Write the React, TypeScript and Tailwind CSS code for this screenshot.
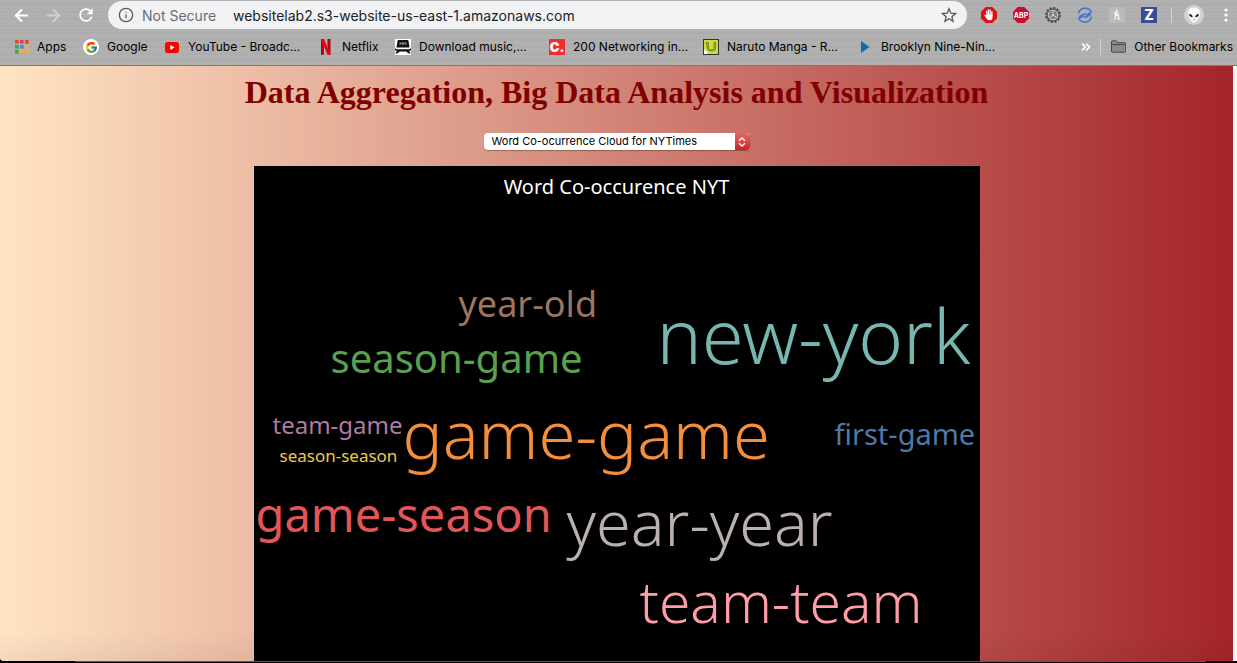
import type { ReactNode } from "react";
import { ArrowLeft, ArrowRight, Info, ChevronsRight } from "lucide-react";
import { MdRefresh } from "react-icons/md";
import { FcGoogle } from "react-icons/fc";

const words = [
  { text: "year-old", style: "left-[205px] top-[120px] text-[36px] text-[#9c755f]" },
  { text: "new-york", style: "left-[403px] top-[131px] text-[76px] text-[#76b7b2] font-light" },
  { text: "season-game", style: "left-[77px] top-[172px] text-[40px] text-[#59a14f]" },
  { text: "game-game", style: "left-[149px] top-[234px] text-[67px] text-[#f28e3c] font-light" },
  { text: "team-game", style: "left-[19px] top-[247px] text-[24px] text-[#b07aa1]" },
  { text: "first-game", style: "left-[581px] top-[253px] text-[29px] text-[#4e79a7]" },
  { text: "season-season", style: "left-[26px] top-[281px] text-[17px] text-[#edc948]" },
  { text: "game-season", style: "left-[2px] top-[325px] text-[47px] text-[#e15759]" },
  { text: "year-year", style: "left-[313px] top-[324px] text-[63px] text-[#bab0ac] font-light" },
  { text: "team-team", style: "left-[386px] top-[407px] text-[57px] text-[#ff9da7] font-light" },
];

function AppsIcon() {
  const colors = ["#ea4335", "#ea4335", "#ea4335", "#34a853", "#4285f4", "#fbab30", "#34a853", "#fbab30", "#fbab30"];
  return (
    <svg width="14" height="14" viewBox="0 0 14 14" aria-hidden="true">
      {colors.map((c, i) => (
        <rect key={i} x={(i % 3) * 5} y={Math.floor(i / 3) * 5} width="3.6" height="3.6" fill={c} />
      ))}
    </svg>
  );
}

function GoogleIcon() {
  return (
    <span className="flex size-4 items-center justify-center rounded-full bg-white">
      <FcGoogle size={13} />
    </span>
  );
}

function YouTubeIcon() {
  return (
    <svg width="16" height="16" viewBox="0 0 16 16" aria-hidden="true">
      <rect x="1" y="3" width="14" height="11" rx="2.5" fill="#f00" />
      <path d="M6.3 6v5l4.2-2.5z" fill="#fff" />
    </svg>
  );
}

function NetflixIcon() {
  return (
    <svg width="16" height="16" viewBox="0 0 16 16" aria-hidden="true">
      <path d="M3 0h3v15.500L3 16zM9.500 0h3v16l-3-.5z" fill="#b1060f" />
      <path d="M3 0h3.200l6.300 16-3.200-.5z" fill="#e50914" />
    </svg>
  );
}

function CassetteIcon() {
  return (
    <svg width="16" height="16" viewBox="0 0 16 16" aria-hidden="true">
      <rect width="16" height="16" fill="#fff" />
      <path d="M3.500 1h9q1 0 1 1l1 6.500h-13L2.500 2q0-1 1-1z" fill="#111" />
      <path d="M4.500 3.500h7v2.300h-1.400v-1H9v1H7v-1H5.900v1H4.500z" fill="#8a8a8a" />
      <path d="M0 9.300l1.500 1h13l1.500-1v2l-2 .8 1.500 1.900-1.200.8-3.300-2.300H5L1.700 14.800.5 14 2 12.100l-2-.8z" fill="#111" />
    </svg>
  );
}

function CourseIcon() {
  return (
    <span className="flex size-4 items-center justify-center bg-[#f22f30] text-[13px] leading-none font-black text-white" aria-hidden="true">
      C.
    </span>
  );
}

function MangaIcon() {
  return (
    <svg width="16" height="16" viewBox="0 0 16 16" aria-hidden="true">
      <rect x=".5" y=".5" width="15" height="15" fill="#cadb3d" stroke="#333" />
      <path d="M3 3.500h2.500v6q0 1.500 2.500 1.500t3-1.500v-6h1.500v6q0 2.500-4 2.500-3.500 0-4-2.500z" fill="#a3b030" stroke="#59621e" strokeWidth=".6" />
      <path d="M1 10.500l4 2.500-1 2H1z" fill="#fff" />
    </svg>
  );
}

function PlayIcon() {
  return (
    <svg width="10" height="14" viewBox="0 0 10 14" aria-hidden="true">
      <path d="M1 1l8.500 6L1 13z" fill="#0d6ca8" />
    </svg>
  );
}

function FolderIcon() {
  return (
    <svg width="16" height="14" viewBox="0 0 16 14" aria-hidden="true">
      <path d="M.5 11.500v-10q0-1 1-1h4l1.500 2h7.500q1 0 1 1v8q0 1-1 1h-13q-1 0-1-1zM.5 4.500h15" fill="#8b8b8b" stroke="#444" />
    </svg>
  );
}

function Bookmark({ icon, label, width }: { icon: ReactNode; label: string; width: string }) {
  return (
    <a href="#" className={`flex shrink-0 items-center gap-2 whitespace-nowrap ${width}`}>
      {icon}
      <span>{label}</span>
    </a>
  );
}

function HandIcon() {
  return (
    <svg width="16" height="16" viewBox="0 0 16 16" aria-hidden="true">
      <path d="M4.700 0h6.600L16 4.700v6.600L11.300 16H4.700L0 11.300V4.700z" fill="#e40d13" />
      <path d="M5.800 9V4.200M7.500 8V2.800M9.200 8V3.200M10.900 9V4.800" stroke="#fff" strokeWidth="1.300" strokeLinecap="round" />
      <path d="M5.200 7.500h6.300v3q0 2.700-2.500 2.700H7.700Q6.500 13.200 5.500 11.500L3.200 8.200q.8-.9 1.600 0l.8.900z" fill="#fff" />
    </svg>
  );
}

function AdblockPlusIcon() {
  return (
    <svg width="16" height="16" viewBox="0 0 16 16" aria-hidden="true">
      <path d="M4.700 0h6.600L16 4.700v6.600L11.300 16H4.700L0 11.300V4.700z" fill="#c70d2c" />
      <text x="8" y="10.700" textAnchor="middle" fontSize="7" fontWeight="700" fontFamily="Inter, sans-serif" fill="#fff">
        ABP
      </text>
    </svg>
  );
}

function GearIcon() {
  return (
    <svg width="16" height="16" viewBox="0 0 16 16" aria-hidden="true">
      <circle cx="8" cy="8" r="7" fill="none" stroke="#444" strokeWidth="1.800" strokeDasharray="2.200 1.465" />
      <circle cx="8" cy="8" r="5.300" fill="none" stroke="#5a5a5a" strokeWidth="2.600" />
      <circle cx="8" cy="8" r="4.700" fill="none" stroke="#c8c8c8" strokeWidth="1.200" />
      <circle cx="8" cy="8" r="3.600" fill="#8a8a8a" stroke="#666" strokeWidth=".6" />
      <path d="M8 8V4.500M8 8l-3 2M8 8l3 2" stroke="#ddd" />
      <circle cx="8" cy="8" r="1.600" fill="#ddd" stroke="#555" strokeWidth=".5" />
    </svg>
  );
}

function SyncIcon() {
  return (
    <svg width="16" height="16" viewBox="0 0 16 16" fill="none" stroke="#3f72dc" strokeWidth="1.500" aria-hidden="true">
      <path d="M1.500 6.500A6.700 6.300 0 0 1 14.200 5L9.800 8.200Q8.500 6.300 6.800 7.200L2 10" />
      <path d="M14.500 9.500A6.700 6.300 0 0 1 1.800 11.500L6.200 8.900q1.500 2 3.200 1.100L14 7" />
    </svg>
  );
}

function HoneyIcon() {
  return (
    <svg width="16" height="16" viewBox="0 0 16 16" aria-hidden="true">
      <rect width="16" height="16" rx="3" fill="#b8bbbf" />
      <path d="M8.500 2.800Q6.500 4 6 12.500M4.800 6h5M6.200 9.500q2.300-3 3.300-1.500.6 1-.3 3.800.4 1 1.600-.2" fill="none" stroke="#fff" strokeWidth="1.200" />
    </svg>
  );
}

function AlienIcon() {
  return (
    <svg width="20" height="20" viewBox="0 0 20 20" aria-hidden="true">
      <circle cx="10" cy="10" r="10" fill="#d2d2d2" />
      <path d="M10 2.500c4.500 0 6.500 3 6 6.500-.4 4-4 8.500-6 8.500s-5.600-4.500-6-8.500c-.5-3.500 1.500-6.500 6-6.500z" fill="#fafafa" />
      <path d="M5 9q3.300 0 3.800 3.200Q5.500 12.200 5 9zM15 9q-3.300 0-3.800 3.200 3.300 0 3.800-3.200z" fill="#222" />
      <path d="M9 14.800h2" stroke="#777" strokeWidth=".7" />
    </svg>
  );
}

function BrowserBar() {
  return (
    <header className="h-[66px] shrink-0 border-b border-[#7c7c7c] bg-[#b0b0b0] bg-[repeating-linear-gradient(180deg,#b3b3b3_0px,#aeaeae_2px,#b2b2b2_3px,#ababab_5px,#b3b3b3_7px)] text-black">
      <div className="flex h-[30px] items-center pr-[5px] pl-3">
        <nav className="flex items-center gap-[13px] text-white">
          <button aria-label="Back"><ArrowLeft size={19} strokeWidth={2.500} /></button>
          <button aria-label="Forward" className="text-[#d0d0d0]"><ArrowRight size={19} strokeWidth={2.500} /></button>
          <button aria-label="Reload"><MdRefresh size={20} /></button>
        </nav>
        <div className="ml-3 flex h-7 min-w-0 flex-1 items-center rounded-full bg-[#f1f2f4] px-[10px] text-[14px]">
          <Info size={16} className="shrink-0 text-[#5a5d61]" />
          <span className="ml-2 w-[82px] shrink-0 whitespace-nowrap text-[#6a6d71]">Not Secure</span>
          <input
            aria-label="Address"
            className="ml-[9px] min-w-0 flex-1 bg-transparent text-[#202124] outline-none"
            defaultValue="websitelab2.s3-website-us-east-1.amazonaws.com"
          />
          <button aria-label="Bookmark this page">
            <svg width="16" height="16" viewBox="0 0 16 16" fill="none" stroke="#55585c" strokeWidth="1.300" aria-hidden="true">
              <path d="M8 1.800l1.800 4.400 4.700.4-3.600 3.100 1.100 4.600L8 11.800l-4 2.500 1.100-4.600-3.600-3.100 4.700-.4z" />
            </svg>
          </button>
        </div>
        <div className="ml-[14px] flex shrink-0 items-center gap-4">
          <button aria-label="Ad blocker"><HandIcon /></button>
          <button aria-label="Adblock Plus"><AdblockPlusIcon /></button>
          <button aria-label="Settings"><GearIcon /></button>
          <button aria-label="Sync"><SyncIcon /></button>
          <button aria-label="Coupons"><HoneyIcon /></button>
          <button className="size-4 bg-[#3b4a9b] text-[14px] leading-4 font-extrabold text-white">Z</button>
        </div>
        <span className="ml-[14px] h-4 w-px bg-[#d2d2d2]" />
        <button aria-label="Profile" className="ml-3"><AlienIcon /></button>
        <button aria-label="Menu" className="ml-5 w-2">
          <svg width="4" height="16" viewBox="0 0 4 16" fill="#fff" aria-hidden="true">
            <circle cx="2" cy="3" r="1.600" />
            <circle cx="2" cy="8" r="1.600" />
            <circle cx="2" cy="13" r="1.600" />
          </svg>
        </button>
      </div>
      <nav className="flex h-[34px] items-center pr-1 pl-[15px] text-[12px]">
        <Bookmark icon={<AppsIcon />} label="Apps" width="w-[68px]" />
        <Bookmark icon={<GoogleIcon />} label="Google" width="w-[81px]" />
        <Bookmark icon={<YouTubeIcon />} label="YouTube - Broadc..." width="w-[154px]" />
        <Bookmark icon={<NetflixIcon />} label="Netflix" width="w-[77px]" />
        <Bookmark icon={<CassetteIcon />} label="Download music,..." width="w-[154px]" />
        <Bookmark icon={<CourseIcon />} label="200 Networking in..." width="w-[154px]" />
        <Bookmark icon={<MangaIcon />} label="Naruto Manga - R..." width="w-[154px]" />
        <Bookmark
          icon={<span className="flex w-4 justify-center"><PlayIcon /></span>}
          label="Brooklyn Nine-Nin..."
          width="w-[140px]"
        />
        <div className="ml-auto flex shrink-0 items-center">
          <button aria-label="More bookmarks" className="text-white"><ChevronsRight size={14} strokeWidth={3} /></button>
          <span className="mr-[10px] ml-[7px] h-4 w-px bg-[#cfcfcf]" />
          <a href="#" className="flex w-[122px] items-center gap-2 whitespace-nowrap">
            <FolderIcon />
            <span>Other Bookmarks</span>
          </a>
        </div>
      </nav>
    </header>
  );
}

export default function App() {
  return (
    <div className="flex h-screen flex-col overflow-hidden bg-black font-['Inter',sans-serif]">
      <BrowserBar />
      <div className="flex min-h-0 flex-1 overflow-hidden rounded-bl-[4px] bg-[#f7f7f7] pr-1">
        <main className="flex min-w-0 flex-1 flex-col items-center bg-[linear-gradient(0deg,rgba(0,0,0,0.050),transparent_30px),linear-gradient(90deg,#ffe4c4,#a52529)] pt-2">
          <h1 className="font-['Liberation_Serif',serif] text-[32px] leading-[37px] font-bold text-[#800000]">
            Data Aggregation, Big Data Analysis and Visualization
          </h1>
          <div className="relative mt-[22px] mb-4 h-[17px] w-[266px] shrink-0 overflow-hidden rounded-[4px] bg-white shadow-[0_1px_1px_rgba(0,0,0,0.300)]">
            <select
              aria-label="Visualization"
              className="block h-full w-full appearance-none bg-transparent pl-2 text-[11px] leading-[17px] text-black outline-none"
            >
              <option>Word Co-ocurrence Cloud for NYTimes</option>
            </select>
            <span className="pointer-events-none absolute inset-y-0 right-0 flex w-[15px] flex-col items-center justify-center bg-linear-to-b from-[#e0686a] to-[#cc1d20] text-white">
              <svg width="8" height="10" viewBox="0 0 8 10" fill="none" stroke="currentColor" strokeWidth="1.300" aria-hidden="true">
                <path d="M1 3.800L4 1l3 2.800M1 6.200L4 9l3-2.800" />
              </svg>
            </span>
          </div>
          <section className="relative w-[726px] max-w-full flex-1 overflow-hidden bg-black font-['Noto_Sans',sans-serif]">
            <h2 className="pt-[7px] text-center text-[20px] leading-[27px] text-white">Word Co-occurence NYT</h2>
            {words.map((w) => (
              <span key={w.text} className={`absolute leading-none whitespace-nowrap ${w.style}`}>
                {w.text}
              </span>
            ))}
          </section>
        </main>
      </div>
      <footer className="h-[2px] shrink-0 px-[3px]">
        <div className="mr-7 ml-[72px] h-px bg-[#5c595b]" />
      </footer>
    </div>
  );
}
